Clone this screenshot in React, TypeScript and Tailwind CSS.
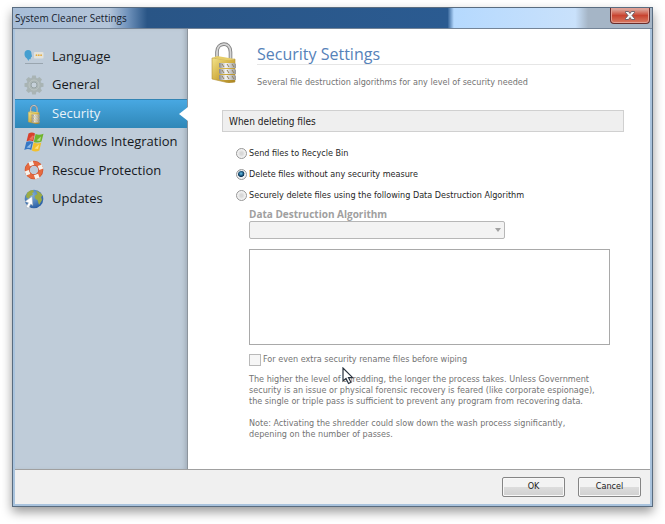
import { useState } from "react";
import type { ReactNode } from "react";

const LockIcon = ({ className, id }: { className: string; id: string }) => (
  <svg viewBox="0 0 26 42" className={className} aria-hidden="true">
    <defs>
      <linearGradient id={`${id}-body`} x1="0" y1="0" x2="1" y2="1">
        <stop offset="0" stopColor="#f3e38a" />
        <stop offset="0.5" stopColor="#d3b144" />
        <stop offset="1" stopColor="#a8821f" />
      </linearGradient>
      <linearGradient id={`${id}-bar`} x1="0" x2="1">
        <stop offset="0" stopColor="#8a8a8a" />
        <stop offset="0.4" stopColor="#f4f4f4" />
        <stop offset="1" stopColor="#999" />
      </linearGradient>
    </defs>
    <path
      d="M6 20V11C6 1 19.500 0 19.500 11v8"
      fill="none"
      stroke="#808080"
      strokeWidth="3.600"
    />
    <path
      d="M6 20V11C6 1 19.500 0 19.500 11v8"
      fill="none"
      stroke="#d5d5d5"
      strokeWidth="1.800"
    />
    <path
      d="M1 17 18 19l6-1v23l-6 1L1 38Z"
      fill={`url(#${id}-body)`}
      stroke="#b3923a"
      strokeWidth="0.600"
    />
    <path d="m1 17 5-2 18 3-6 1.500Z" fill="#e6cd68" />
    {[22, 28, 34].map((y) => (
      <g key={y}>
        <path d={`M8 ${y}h15l2 1v4H9l-1-1Z`} fill={`url(#${id}-bar)`} />
        <path
          d={`M11 ${y + 1}l2 3M16 ${y + 1}l2 3M21 ${y + 1}l2 3`}
          stroke="#94825a"
          strokeWidth="1"
        />
      </g>
    ))}
  </svg>
);

const LanguageIcon = () => (
  <svg viewBox="0 0 20 20" className="size-5" aria-hidden="true">
    <path
      d="M.5 8c0-3 1.500-4 3.500-4 2.500 0 3.500 1.500 3.500 4L8 10.500l-1 .8-.5 2H5L4.500 15 3 12.500C1.500 11.500.5 10 .5 8Z"
      fill="#459fd0"
    />
    <rect x="10" y="6" width="9.500" height="6.500" rx="1" fill="#e3e3dc" />
    <circle cx="12.500" cy="9.200" r="0.900" fill="#e6aa38" />
    <circle cx="14.800" cy="9.200" r="0.900" fill="#e6aa38" />
    <circle cx="17.100" cy="9.200" r="0.900" fill="#e6aa38" />
    <path d="M1 17.500h18" stroke="#8f9ba5" strokeWidth="0.800" />
  </svg>
);

const GearIcon = () => (
  <svg viewBox="0 0 20 20" className="size-5" aria-hidden="true">
    <g fill="#a9b4b4">
      {[0, 45, 90, 135, 180, 225, 270, 315].map((a) => (
        <path
          key={a}
          d="M7.500 4 8.200.5h3.600l.7 3.500Z"
          transform={`rotate(${a} 10 10)`}
        />
      ))}
    </g>
    <circle
      cx="10"
      cy="10"
      r="5.300"
      fill="#c3cdd2"
      stroke="#a9b4b4"
      strokeWidth="4"
    />
    <circle cx="10" cy="10" r="5" fill="none" stroke="#bcc5c3" />
    <circle cx="10" cy="10" r="3" fill="#c6d1da" stroke="#97a3a3" />
  </svg>
);

const WindowsIcon = () => (
  <svg viewBox="0 0 20 20" className="size-5" aria-hidden="true">
    <path
      d="M4.500 1.500C7 0 9 .3 11 1.500L9.200 9.500C7 8.200 5 8.200 2.500 9.500Z"
      fill="#d8402c"
    />
    <path
      d="M11.600 2c2.200 1 4.900 1 7.900-.3l-2 7.900c-2.500 1.200-5.200 1.300-7.700.4Z"
      fill="#6fb42e"
    />
    <path
      d="M2.300 10.100c2.300-1.200 4.700-1 6.800 0L7.300 18C5 16.800 3 16.700.3 18Z"
      fill="#3677c4"
    />
    <path
      d="M9.700 10.600c2.400 1.100 5 1 7.600-.1l-2 7.900c-2.300 1.300-5 1.400-7.500.1Z"
      fill="#f2c02e"
    />
    <path d="M8.500 3.500 10 4 8.600 8 5 7.200Z" fill="#f08b74" opacity="0.700" />
    <path d="m12.500 8.500 4.500-4-.9 4.500Z" fill="#c9e8a0" opacity="0.800" />
    <path d="m2.500 15.500 5-4.500-1.200 5Z" fill="#a5cdf2" opacity="0.800" />
    <path d="m10.500 16.500 4.500-4-1 4.500Z" fill="#ffe99c" opacity="0.800" />
  </svg>
);

const RescueIcon = () => (
  <svg viewBox="0 0 20 20" className="size-5" aria-hidden="true">
    <circle
      cx="10"
      cy="10"
      r="6.800"
      fill="none"
      stroke="#c9512f"
      strokeWidth="5"
    />
    <circle
      cx="10"
      cy="10"
      r="6.800"
      fill="none"
      stroke="#e66a3f"
      strokeWidth="3.800"
    />
    <g stroke="#f5f2ed" strokeWidth="4.500">
      <path d="m8 5.500-1.500-4M14.500 8l4-1.500M12 14.500l1.500 4M5.500 12l-4 1.500" />
    </g>
  </svg>
);

const GlobeIcon = () => (
  <svg viewBox="0 0 20 20" className="size-5" aria-hidden="true">
    <defs>
      <radialGradient id="globe" cx="0.4" cy="0.3" r="0.7">
        <stop offset="0" stopColor="#82afd8" />
        <stop offset="1" stopColor="#2a5fa5" />
      </radialGradient>
    </defs>
    <circle cx="10" cy="10" r="9.300" fill="url(#globe)" />
    <path
      d="M3 4c2-2 4-3 6-3l1 2-2 1 1 2-3 1-1 3-3-2ZM12 2c3 .2 5 2 6.500 4.500L17 8l1 3-3 5-1.500-5-2-1-1-3 3-2Z"
      fill="#9cab45"
    />
    <path
      d="m8 7.500.8 9-2-1.500-2.300 4.200-2.300-1.400L4.500 13.800 1 12.500Z"
      fill="#fff"
      stroke="#a5adb5"
      strokeWidth="0.500"
    />
  </svg>
);

const navItems: { name: string; icon: ReactNode }[] = [
  { name: "Language", icon: <LanguageIcon /> },
  { name: "General", icon: <GearIcon /> },
  { name: "Security", icon: <LockIcon id="nav-lock" className="h-5 w-5" /> },
  { name: "Windows Integration", icon: <WindowsIcon /> },
  { name: "Rescue Protection", icon: <RescueIcon /> },
  { name: "Updates", icon: <GlobeIcon /> },
];

const deleteModes = [
  "Send files to Recycle Bin",
  "Delete files without any security measure",
  "Securely delete files using the following Data Destruction Algorithm",
];

function TitleBar() {
  return (
    <header className="flex h-[21px] shrink-0 justify-between border-b border-[#748497] bg-[linear-gradient(90deg,#a7bdd7_0%,#b4c5d9_15%,#6f92bb_18%,#295586_21%,#2b5b91_68%,#b5d9fe_69%,#c9e1fb_88%,#a5b5c6_90%,#a5b5c6_100%)] pl-[2px]">
      <h1 className="text-[10px] leading-[20px] text-[#15202c]">
        System Cleaner Settings
      </h1>
      <button
        aria-label="Close"
        className="mr-[2px] flex h-4 w-10 items-center justify-center rounded-b border border-t-0 border-[#672d2c] bg-linear-to-b from-[#dba095] from-10% via-[#c84330] via-50% to-[#d87961] shadow-[inset_0_0_0_1px_#e3a094]"
      >
        <svg viewBox="0 0 10 9" className="h-[9px] w-[10px]" aria-hidden="true">
          <path
            d="M.5.5h3L5 2.500 6.500.5h3v1L7 4.500l2.500 3v1h-3L5 6.500l-1.500 2h-3v-1L3 4.500.5 1.500Z"
            fill="#f6f6f6"
            stroke="#53505d"
            strokeWidth="0.800"
          />
        </svg>
      </button>
    </header>
  );
}

function Sidebar() {
  const [active, setActive] = useState("Security");

  return (
    <nav className="w-[173px] shrink-0 border-r border-[#8c949c] bg-[#bfccd9] pt-[13px] shadow-[inset_-4px_0_4px_-2px_#a2aeba]">
      <ul className="grid h-[171px] grid-rows-6">
        {navItems.map((item) => (
          <li key={item.name} className="relative">
            <button
              onClick={() => setActive(item.name)}
              className={`flex size-full items-center gap-2 pl-[9px] text-left text-[13px] whitespace-nowrap ${
                item.name === active
                  ? "border-t border-[#3384b4] bg-linear-to-b from-[#48a8e2] to-[#2f87b7] text-[#e8f3fa]"
                  : "text-[#16191d]"
              }`}
            >
              {item.icon}
              {item.name}
            </button>
            {item.name === active && (
              <svg
                viewBox="0 0 10 14"
                className="absolute top-2 -right-px h-3.5 w-2.5"
                aria-hidden="true"
              >
                <path d="M10 0 1 7l9 7Z" fill="#fff" />
              </svg>
            )}
          </li>
        ))}
      </ul>
    </nav>
  );
}

function DeletePanel() {
  const [mode, setMode] = useState(1);

  return (
    <section className="mt-[21px] ml-[34px] mr-[26px] font-['DejaVu_Sans_Condensed','DejaVu_Sans',sans-serif]">
      <h3 className="h-[22px] border border-[#d0d0d0] bg-[#efefef] pl-[6px] text-[10px] leading-[22px] text-[#222]">
        When deleting files
      </h3>
      <div className="mt-[11px] ml-[14px] text-[9px]">
        {deleteModes.map((label, i) => (
          <label
            key={label}
            className="flex h-[21px] items-center gap-[2px] whitespace-nowrap text-[#262626]"
          >
            <input
              type="radio"
              name="mode"
              checked={mode === i}
              onChange={() => setMode(i)}
              className="size-[11px] appearance-none rounded-full border border-[#979797] bg-[radial-gradient(circle,#d8d8d8_20%,#fafafa_75%)] shadow-[inset_0_0_0_1px_#f2f2f2] checked:bg-[radial-gradient(circle_at_45%_40%,#68c5eb_0%,#164d74_32%,#0d3452_42%,#e8eef2_50%)]"
            />
            {label}
          </label>
        ))}
      </div>
      <div className="mr-[14px] ml-[27px] text-[9px] text-[#747474]">
        <label
          htmlFor="algorithm"
          className="mt-px block font-['Open_Sans','Noto_Sans',sans-serif] text-[10px] leading-[14px] font-bold text-[#a0a0a0]"
        >
          Data Destruction Algorithm
        </label>
        <div className="grid w-64 max-w-full items-center">
          <select
            id="algorithm"
            disabled
            className="col-start-1 row-start-1 h-[18px] appearance-none rounded-xs border border-[#b7b7b7] bg-[#f3f3f3]"
          />
          <svg
            viewBox="0 0 6 4"
            className="pointer-events-none col-start-1 row-start-1 mr-1 h-1 w-1.5 justify-self-end"
            aria-hidden="true"
          >
            <path d="M0 0h6L3 4Z" fill="#a2a2a2" />
          </svg>
        </div>
        <textarea
          aria-label="Algorithm description"
          readOnly
          className="mt-[10px] block h-24 w-full resize-none border border-[#a9a9a9] bg-white"
        />
        <label className="mt-[9px] flex h-3 items-center gap-[2px]">
          <input
            type="checkbox"
            disabled
            className="size-3 appearance-none border border-[#b9b9b9] bg-[#f6f6f6]"
          />
          For even extra security rename files before wiping
        </label>
        <div className="relative mt-[8px] leading-[11px]">
          <p>
            The higher the level of shredding, the longer the process takes.
            Unless Government
            <br />
            security is an issue or physical forensic recovery is feared (like
            corporate espionage),
            <br />
            the single or triple pass is sufficient to prevent any program from
            recovering data.
          </p>
          <p className="mt-[11px]">
            Note: Activating the shredder could slow down the wash process
            significantly,
            <br />
            depening on the number of passes.
          </p>
          {/* mouse pointer */}
          <svg
            viewBox="0 0 12 18"
            className="absolute -top-[7px] left-[93px] h-[18px] w-3"
            aria-hidden="true"
          >
            <path
              d="M1 1v13l3-2.500 2.500 5 2.500-1.200-2.500-4.600h4.200Z"
              fill="#fff"
              stroke="#27313d"
              strokeWidth="1.200"
            />
          </svg>
        </div>
      </div>
    </section>
  );
}

export default function App() {
  return (
    <div className="flex min-h-screen bg-white px-3 pt-[7px] pb-[17px] font-['Open_Sans','Noto_Sans',sans-serif]">
      <div className="flex min-w-0 flex-1 flex-col border border-[#596c80] bg-[#a9c3dd] shadow-[0_5px_10px_0_#00000066]">
        <TitleBar />
        <div className="mx-[2px] mb-[2px] flex flex-1 flex-col">
          <div className="flex flex-1">
            <Sidebar />
            <main className="min-w-0 flex-1 bg-white">
              <div className="flex pt-3 pr-[19px] pl-[23px]">
                <LockIcon id="head-lock" className="h-[42px] w-[26px]" />
                <div className="ml-5 flex-1">
                  <h2 className="h-6 border-b border-[#e6e6e6] text-[16px] leading-[26px] text-[#5682b9]">
                    Security Settings
                  </h2>
                  <p className="mt-[10px] font-['DejaVu_Sans_Condensed','DejaVu_Sans',sans-serif] text-[9px] leading-[14px] text-[#747474]">
                    Several file destruction algorithms for any level of
                    security needed
                  </p>
                </div>
              </div>
              <DeletePanel />
            </main>
          </div>
          <footer className="flex h-[35px] items-center justify-end gap-[13px] border-t border-[#a0a0a0] bg-[#f0f0f0] pr-[9px] font-['DejaVu_Sans_Condensed','DejaVu_Sans',sans-serif] text-[9px] text-[#222]">
            {["OK", "Cancel"].map((label) => (
              <button
                key={label}
                className="h-5 w-[63px] rounded-xs border border-[#858585] bg-linear-to-b from-[#f3f3f3] from-50% via-[#dddddd] via-50% to-[#d0d0d0] shadow-[inset_0_0_0_1px_#f8f8f8]"
              >
                {label}
              </button>
            ))}
          </footer>
        </div>
      </div>
    </div>
  );
}
